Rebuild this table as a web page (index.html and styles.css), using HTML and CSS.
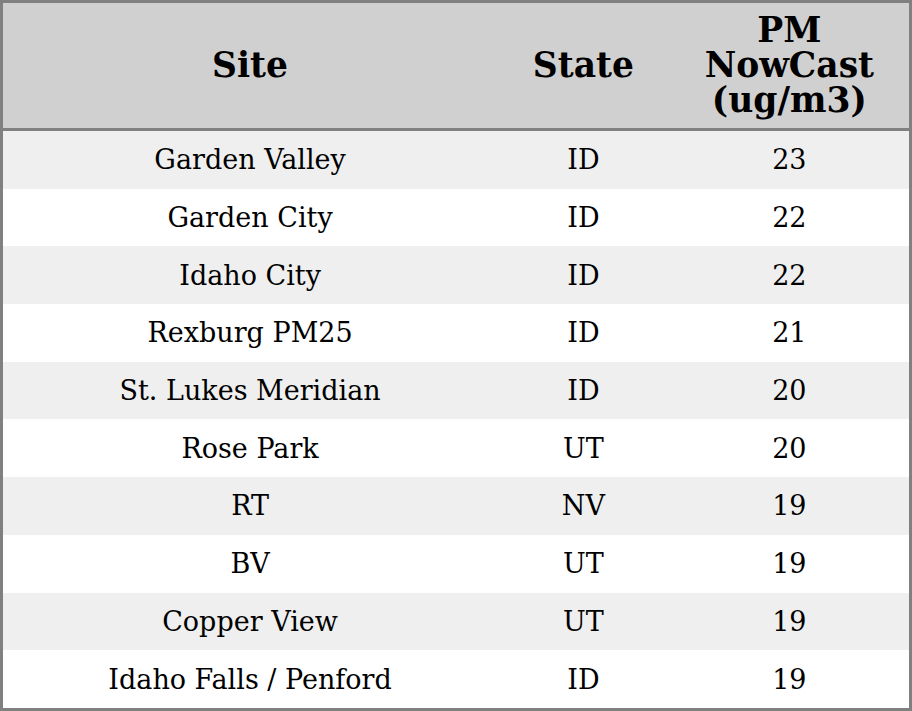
FILE: index.html
```html
<!DOCTYPE html>
<html>
<head>
<meta charset="utf-8">
<link rel="stylesheet" href="styles.css">
</head>
<body>
<table class="data">
  <colgroup>
    <col class="c-site">
    <col class="c-state">
    <col class="c-pm">
  </colgroup>
  <thead>
    <tr><th>Site</th><th>State</th><th>PM<br>NowCast<br>(ug/m3)</th></tr>
  </thead>
  <tbody>
    <tr><td>Garden Valley</td><td>ID</td><td>23</td></tr>
    <tr><td>Garden City</td><td>ID</td><td>22</td></tr>
    <tr><td>Idaho City</td><td>ID</td><td>22</td></tr>
    <tr><td>Rexburg PM25</td><td>ID</td><td>21</td></tr>
    <tr><td>St. Lukes Meridian</td><td>ID</td><td>20</td></tr>
    <tr><td>Rose Park</td><td>UT</td><td>20</td></tr>
    <tr><td>RT</td><td>NV</td><td>19</td></tr>
    <tr><td>BV</td><td>UT</td><td>19</td></tr>
    <tr><td>Copper View</td><td>UT</td><td>19</td></tr>
    <tr><td>Idaho Falls / Penford</td><td>ID</td><td>19</td></tr>
  </tbody>
</table>
</body>
</html>
```
FILE: styles.css
```css
html, body {
  margin: 0;
  padding: 0;
  background: #ffffff;
}
.data {
  width: 912px;
  border-collapse: collapse;
  border: 3px solid #808080;
  font-family: "DejaVu Serif", serif;
  color: #000;
  table-layout: fixed;
}
.c-site { width: 494px; }
.c-state { width: 172px; }
.c-pm { width: 240px; }
.data th {
  background: #d0d0d0;
  font-size: 34.5px;
  font-weight: bold;
  line-height: 35px;
  height: 125px;
  padding: 0;
  text-align: center;
  vertical-align: middle;
  border-bottom: 3px solid #808080;
}
.data td {
  font-size: 27px;
  text-align: center;
  vertical-align: middle;
  padding: 0;
  height: 57.7px;
}
.data tbody tr:nth-child(odd) td {
  background: #efefef;
}
```
